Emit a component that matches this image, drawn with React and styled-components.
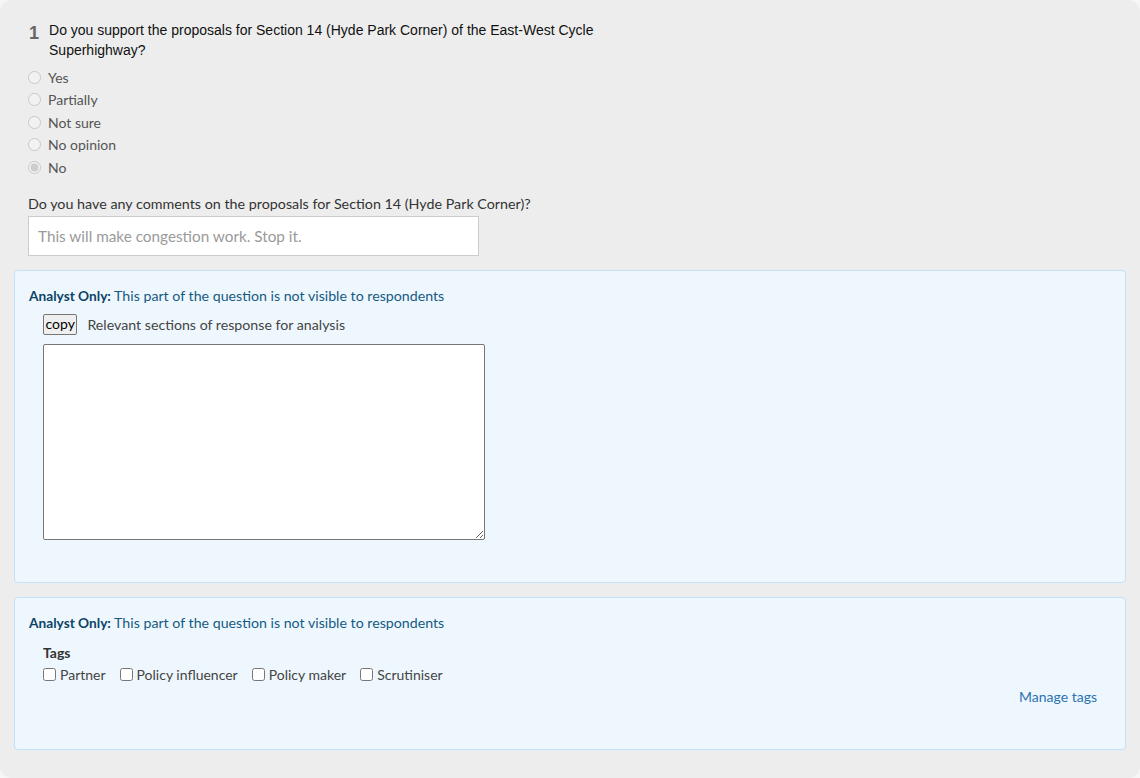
import React from "react";
import styled, { createGlobalStyle } from "styled-components";

const Global = createGlobalStyle`
  html, body { margin: 0; padding: 0; background: #f6f6f6; }
  body { font-family: Lato, "Open Sans", sans-serif; font-size: 14px; color: #333; }
`;

const Page = styled.div`
  box-sizing: border-box;
  min-height: 778px;
  background: #ededed;
  border-radius: 12px;
  padding: 20px 14px 20px 14px;
`;

const Question = styled.div`
  padding: 0 14px;
`;

const TitleRow = styled.div`
  display: flex;
  align-items: flex-start;
  gap: 10px;
  width: 580px;
`;

const Number = styled.span`
  font-family: "Liberation Sans", Arial, sans-serif;
  font-size: 18px;
  font-weight: bold;
  color: #666;
  line-height: 20px;
  padding-top: 3px;
  padding-left: 1px;
`;

const Title = styled.div`
  font-family: "Liberation Sans", Arial, sans-serif;
  font-size: 14px;
  line-height: 20px;
  color: #111;
`;

const Options = styled.div`
  display: flex;
  flex-direction: column;
  margin-top: 6px;
`;

const Option = styled.label`
  display: flex;
  align-items: center;
  height: 22.5px;
  color: #555;
  font-size: 14px;
`;

const Radio = styled.input`
  width: 13px;
  height: 13px;
  margin: 0 7px 0 0;
`;

const CommentLabel = styled.div`
  margin-top: 15px;
  line-height: 20px;
  font-size: 14.3px;
  color: #333;
`;

const TextInput = styled.input`
  box-sizing: border-box;
  display: block;
  margin-top: 2px;
  width: 451px;
  height: 40px;
  border: 1px solid #ccc;
  background: #fff;
  padding: 0 9px;
  font-family: Lato, sans-serif;
  font-size: 15.3px;
  color: #999;
  outline: none;
  &::placeholder { color: #9a9a9a; }
`;

const Panel = styled.section`
  box-sizing: border-box;
  margin-top: 14px;
  background: #eef7fe;
  border: 1px solid #c3e2f8;
  border-radius: 4px;
  padding: 15px 28px ${(p) => p.$bottom}px 14px;
`;

const Notice = styled.div`
  line-height: 20px;
  font-size: 14.2px;
  color: #155a82;
  b { color: #0c4468; font-weight: bold; font-size: 13.7px; }
`;

const Indent = styled.div`
  padding-left: 14px;
`;

const CopyRow = styled.div`
  display: flex;
  align-items: center;
  gap: 10px;
  margin-top: 8px;
  height: 21px;
  color: #444;
  font-size: 14.2px;
`;

const CopyButton = styled.button`
  font-family: Lato, sans-serif;
  font-size: 14px;
  color: #000;
  background: #efefef;
  border: 1px solid #767676;
  border-radius: 2px;
  padding: 0 1.5px;
  height: 21px;
  line-height: 18px;
`;

const Area = styled.textarea`
  box-sizing: border-box;
  display: block;
  margin-top: 9px;
  width: 442px;
  height: 196px;
  border: 1px solid #767676;
  border-radius: 2px;
  background: #fff;
`;

const TagsTitle = styled.div`
  margin-top: 10px;
  font-weight: bold;
  line-height: 20px;
  color: #333;
`;

const TagList = styled.div`
  display: flex;
  align-items: center;
  gap: 14px;
  height: 24px;
`;

const Tag = styled.label`
  display: flex;
  align-items: center;
  color: #444;
`;

const Check = styled.input`
  width: 13px;
  height: 13px;
  margin: 0 4px 0 0;
`;

const Footer = styled.div`
  display: flex;
  justify-content: flex-end;
  line-height: 20px;
`;

const Link = styled.a`
  color: #2b72b3;
  text-decoration: none;
  font-size: 14px;
`;

const options = ["Yes", "Partially", "Not sure", "No opinion", "No"];
const tags = ["Partner", "Policy influencer", "Policy maker", "Scrutiniser"];

export default function App() {
  return (
    <>
      <Global />
      <Page>
        <Question>
          <TitleRow>
            <Number>1</Number>
            <Title>
              Do you support the proposals for Section 14 (Hyde Park Corner) of the East-West Cycle Superhighway?
            </Title>
          </TitleRow>
          <Options>
            {options.map((o) => (
              <Option key={o}>
                <Radio type="radio" name="q1" disabled defaultChecked={o === "No"} />
                {o}
              </Option>
            ))}
          </Options>
          <CommentLabel>Do you have any comments on the proposals for Section 14 (Hyde Park Corner)?</CommentLabel>
          <TextInput readOnly placeholder="This will make congestion work. Stop it." />
        </Question>

        <Panel $bottom={42}>
          <Notice>
            <b>Analyst Only:</b> This part of the question is not visible to respondents
          </Notice>
          <Indent>
            <CopyRow>
              <CopyButton>copy</CopyButton>
              <span>Relevant sections of response for analysis</span>
            </CopyRow>
            <Area />
          </Indent>
        </Panel>

        <Panel $bottom={42}>
          <Notice>
            <b>Analyst Only:</b> This part of the question is not visible to respondents
          </Notice>
          <Indent>
            <TagsTitle>Tags</TagsTitle>
            <TagList>
              {tags.map((t) => (
                <Tag key={t}>
                  <Check type="checkbox" />
                  {t}
                </Tag>
              ))}
            </TagList>
            <Footer>
              <Link href="#">Manage tags</Link>
            </Footer>
          </Indent>
        </Panel>
      </Page>
    </>
  );
}
